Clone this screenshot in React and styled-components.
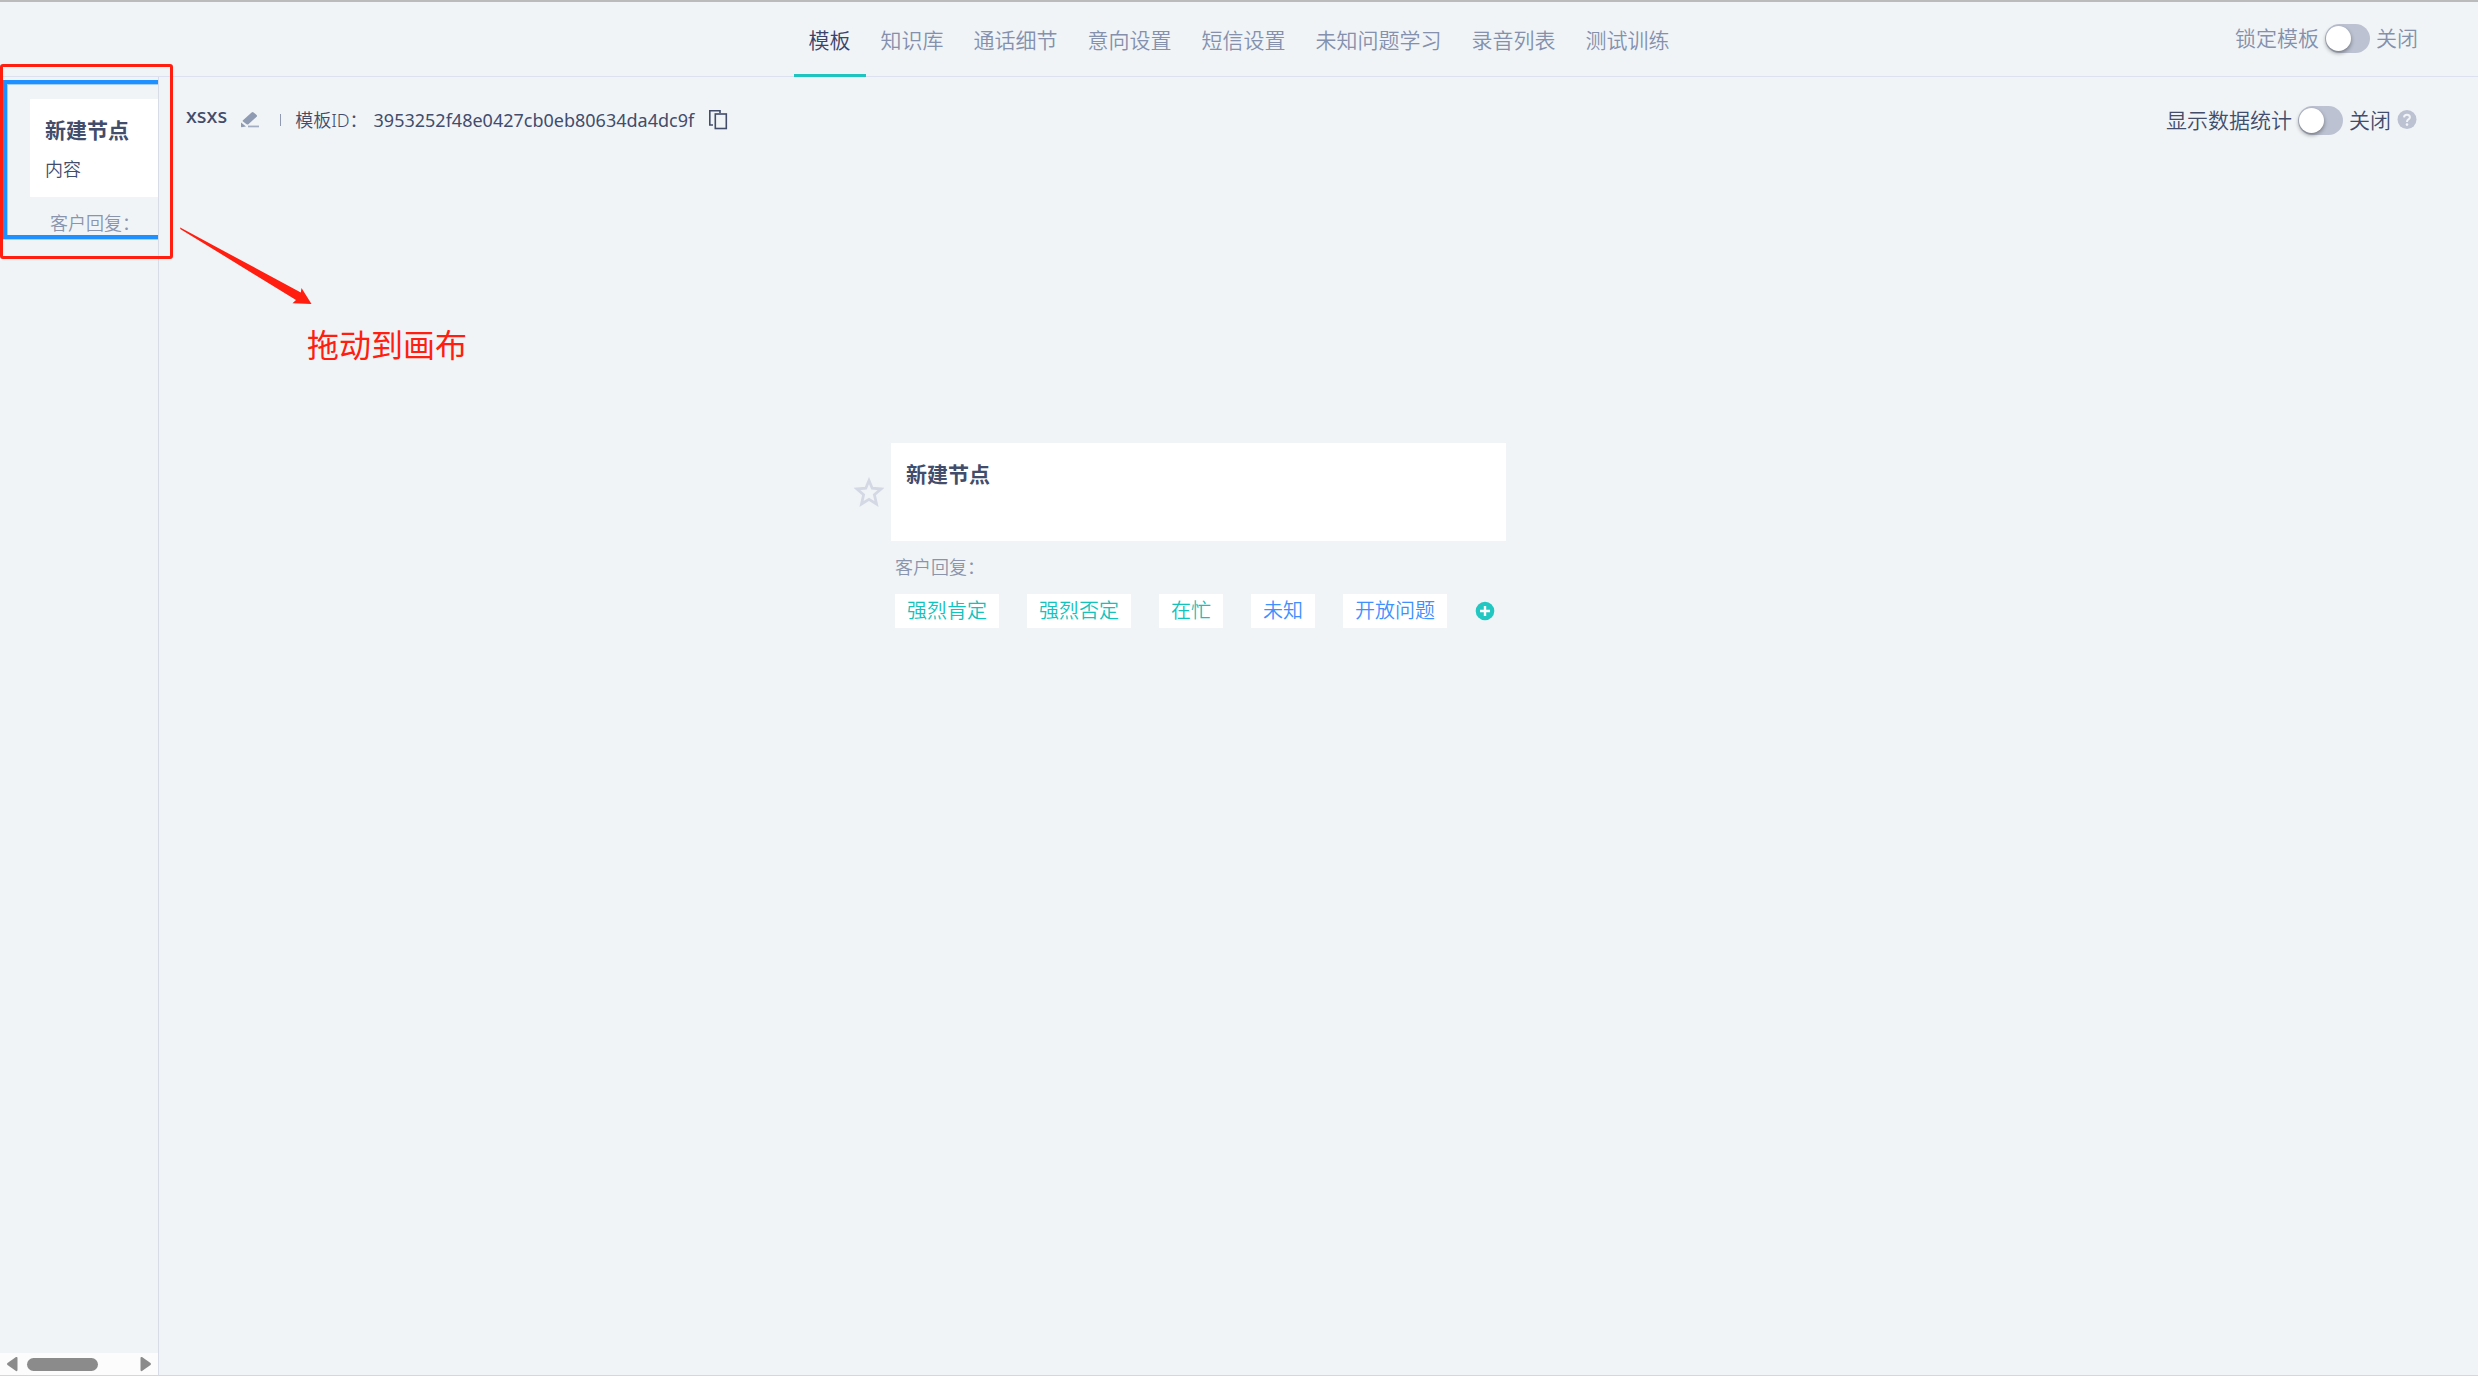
import { useState } from 'react';
import styled, { createGlobalStyle } from 'styled-components';

const GlobalStyle = createGlobalStyle`
  * { box-sizing:border-box; }
  body { margin:0; background:#f0f4f7; color:#424c6b; font-family:"Noto Sans", "Noto Sans CJK SC", sans-serif; font-weight:350; }
  button, input { font-family:inherit; font-weight:inherit; }
`;

const Page = styled.div`min-height:100vh; display:flex; flex-direction:column; border-top:2px solid #bbbbbb; border-bottom:1px solid #d6d6e0;`;
const Header = styled.header`display:grid; grid-template-columns:1fr auto 1fr; height:75px; border-bottom:1px solid #dce1f1;`;
const Tabs = styled.nav`grid-column:2; display:flex; height:75px;`;
const Tab = styled.a`
  padding:0 15px; font-size:21px; line-height:76px; text-decoration:none; white-space:nowrap;
  color:${p => p.$active ? '#39436b' : '#8490ac'};
  border-bottom:3px solid ${p => p.$active ? '#1fc4c1' : 'transparent'};
`;
const HeaderRight = styled.div`display:flex; justify-content:flex-end; align-items:center; padding:0 60px 3px 0; color:#8490ac;`;

const Body = styled.div`flex:1; display:flex;`;
const Sidebar = styled.aside`width:159px; flex:none; display:flex; flex-direction:column; justify-content:space-between; overflow:hidden; border-right:1px solid #d7dce7;`;
const Canvas = styled.main`flex:1; position:relative;`;

const DragItem = styled.div`
  margin:3px 0 0 3px; padding:15px 0 0 23px; height:159px;
  border:4px solid #1e90ff; border-right:none; box-shadow:inset 1px 1px 0 #a5cdf6, 0 1px 0 #a5cdf6; cursor:grab;
`;
const Card = styled.div`height:98px; padding:15px; background:#fff;`;
const CardTitle = styled.h3`margin:0; font-size:21px; line-height:32px; font-weight:700; white-space:nowrap;`;
const CardText = styled.p`margin:9px 0 0; font-size:18px; line-height:28px;`;
const ReplyLabel = styled.div`margin:13px 0 0 ${p => p.$indent}px; font-size:18px; line-height:26px; color:#8a94ac; white-space:nowrap;`;

const ScrollBar = styled.div`height:22px; padding:0 6px; display:flex; align-items:center; background:#fcfcfc;`;
const ScrollButton = styled.button`display:flex; padding:0; border:none; background:none;`;
const ScrollTrack = styled.div`flex:1; padding:0 9px;`;
const ScrollThumb = styled.div`width:68%; height:13px; border-radius:7px; background:#8b8b8b;`;

const InfoRow = styled.div`display:flex; justify-content:space-between; align-items:center; height:86px; padding:0 61px 0 27px;`;
const InfoGroup = styled.div`display:flex; align-items:center;`;
const Name = styled.span`font-size:20px; line-height:28px; font-weight:500; padding-bottom:8px;`;
const IconButton = styled.button`display:flex; padding:0; border:none; background:none; cursor:pointer; margin-left:${p => p.$gap || 0}px;`;
const Divider = styled.span`width:1px; height:12px; margin:0 14px 0 20px; background:#8f9bb3;`;
const TemplateId = styled.span`font-size:18px; line-height:28px; white-space:pre;`;
const IdValue = styled.span`margin-left:6px; font-weight:400;`;

const SwitchLabel = styled.label`display:flex; align-items:center; font-size:21px; line-height:32px; white-space:nowrap;`;
const Toggle = styled.input`
  appearance:none; width:45px; height:29px; margin:0 6px; border-radius:15px; background:#bcc2d2; cursor:pointer;
  &::before { content:''; display:block; width:25px; height:25px; margin:2px 1px; border-radius:50%; background:#fff; box-shadow:0 2px 4px rgba(0,0,0,.4); }
  &:checked { background:#1fc4c1; }
  &:checked::before { margin-left:19px; }
`;

const Node = styled.section`position:absolute; left:732px; top:366px; width:615px;`;
const StarButton = styled(IconButton)`position:absolute; left:-37px; top:34px;`;
const Tags = styled.div`display:flex; align-items:center; gap:28px; margin:14px 0 0 4px;`;
const Tag = styled.button`
  height:34px; padding:0 12px; border:none; background:#fff; font-size:20px; line-height:32px; white-space:nowrap; cursor:pointer;
  color:${p => p.$blue ? '#3f90ff' : '#12c2bc'};
`;

const GuideBox = styled.div`position:absolute; left:0; top:64px; width:173px; height:195px; border:3px solid #ff1e10; border-radius:3px; pointer-events:none;`;
const GuideArrow = styled.svg`position:absolute; left:179px; top:226px; pointer-events:none;`;
const GuideText = styled.div`position:absolute; left:307px; top:321px; font-size:32px; line-height:48px; font-weight:400; color:#ff1e10; white-space:nowrap;`;

const tabs = ['模板', '知识库', '通话细节', '意向设置', '短信设置', '未知问题学习', '录音列表', '测试训练'];
const replies = [
  { text: '强烈肯定' },
  { text: '强烈否定' },
  { text: '在忙' },
  { text: '未知', blue: true },
  { text: '开放问题', blue: true },
];

function Switch({ label }) {
  const [on, setOn] = useState(false);
  return (
    <SwitchLabel>
      {label}
      <Toggle type="checkbox" checked={on} onChange={e=>setOn(e.target.checked)} />
      {on ? '开启' : '关闭'}
    </SwitchLabel>
  );
}

function EditIcon() {
  return (
    <svg width="20" height="18" viewBox="0 0 20 18" fill="#8f9bb3">
      <path d="M11.6 1.4 Q12.6 .5 13.6 1.4 L16.6 4 Q17.5 4.9 16.6 5.8 L8.4 13.2 Q7.6 13.9 6.6 13.3 L3 10.6 Q2.3 9.9 3 9.2 Z" />
      <path d="M1 11.4 L6 15.6 L1.6 16.2 Q1 16.2 1 15.6 Z" />
      <rect x="8" y="14.6" width="11" height="1.7" opacity=".8" />
    </svg>
  );
}

function CopyIcon() {
  return (
    <svg width="20" height="21" viewBox="0 0 20 21" fill="none" stroke="#424c6b" strokeWidth="1.6">
      <path d="M12 3 V.8 H1.8 V15 H5" />
      <rect x="7.3" y="4" width="11" height="14.5" />
    </svg>
  );
}

function HelpIcon() {
  return (
    <svg width="20" height="20" viewBox="0 0 20 20">
      <circle cx="10" cy="9.5" r="9.5" fill="#bcc2d2" />
      <path d="M7 7.4 Q7.1 4.7 10 4.7 Q12.9 4.7 12.9 7.2 Q12.9 8.6 11.2 9.5 Q10 10.3 10 11.9" fill="none" stroke="#f0f4f7" strokeWidth="2" />
      <circle cx="10" cy="14.6" r="1.3" fill="#f0f4f7" />
    </svg>
  );
}

function StarIcon() {
  return (
    <svg width="30" height="30" viewBox="0 0 30 30" fill="none" stroke="#d3d8e4" strokeWidth="2.8">
      <path d="M15 3.5 L18.2 11.2 L27 12 L20.4 17.8 L22.5 27 L15 22.4 L7.5 27 L9.6 17.8 L3 12 L11.8 11.2 Z" />
    </svg>
  );
}

function PlusIcon() {
  return (
    <svg width="20" height="20" viewBox="0 0 20 20">
      <circle cx="10" cy="10" r="9.3" fill="#22c7c2" />
      <path d="M10 5 V15 M5 10 H15" stroke="#fff" strokeWidth="2.4" />
    </svg>
  );
}

export default function App() {
  const [active, setActive] = useState('模板');

  return (
    <>
      <GlobalStyle />
      <Page>
        <Header>
          <Tabs>
            {tabs.map(t => (
              <Tab key={t} href="#" $active={t === active} onClick={()=>setActive(t)}>{t}</Tab>
            ))}
          </Tabs>
          <HeaderRight><Switch label="锁定模板" /></HeaderRight>
        </Header>
        <Body>
          <Sidebar>
            <DragItem draggable>
              <Card>
                <CardTitle>新建节点</CardTitle>
                <CardText>内容</CardText>
              </Card>
              <ReplyLabel $indent={20}>客户回复：</ReplyLabel>
            </DragItem>
            <ScrollBar>
              <ScrollButton aria-label="向左滚动">
                <svg width="12" height="16" viewBox="0 0 12 16"><path d="M10 1 Q11.5 .5 11.5 2 V14 Q11.5 15.5 10 15 L1.5 9 Q.3 8 1.5 7 Z" fill="#8b8b8b" /></svg>
              </ScrollButton>
              <ScrollTrack><ScrollThumb /></ScrollTrack>
              <ScrollButton aria-label="向右滚动">
                <svg width="12" height="16" viewBox="0 0 12 16"><path d="M2 1 Q.5 .5 .5 2 V14 Q.5 15.5 2 15 L10.5 9 Q11.7 8 10.5 7 Z" fill="#8b8b8b" /></svg>
              </ScrollButton>
            </ScrollBar>
          </Sidebar>
          <Canvas>
            <InfoRow>
              <InfoGroup>
                <Name>xsxs</Name>
                <IconButton $gap={13} aria-label="编辑"><EditIcon /></IconButton>
                <Divider />
                <TemplateId>模板ID：<IdValue>3953252f48e0427cb0eb80634da4dc9f</IdValue></TemplateId>
                <IconButton $gap={14} aria-label="复制"><CopyIcon /></IconButton>
              </InfoGroup>
              <InfoGroup>
                <Switch label="显示数据统计" />
                <IconButton $gap={6} aria-label="帮助"><HelpIcon /></IconButton>
              </InfoGroup>
            </InfoRow>
            <Node>
              <StarButton aria-label="收藏"><StarIcon /></StarButton>
              <Card><CardTitle>新建节点</CardTitle></Card>
              <ReplyLabel $indent={4}>客户回复：</ReplyLabel>
              <Tags>
                {replies.map(r => <Tag key={r.text} $blue={r.blue}>{r.text}</Tag>)}
                <IconButton aria-label="添加"><PlusIcon /></IconButton>
              </Tags>
            </Node>
          </Canvas>
        </Body>
      </Page>
      <GuideBox />
      <GuideArrow width="136" height="80" viewBox="0 0 136 80">
        <path d="M1.2 1.5 Q.8 2.6 2 3.4 L117 74 L113.5 77.3 L132.5 78 L122.5 62 L121.8 66.5 Z" fill="#ff1e10" />
      </GuideArrow>
      <GuideText>拖动到画布</GuideText>
    </>
  );
}
